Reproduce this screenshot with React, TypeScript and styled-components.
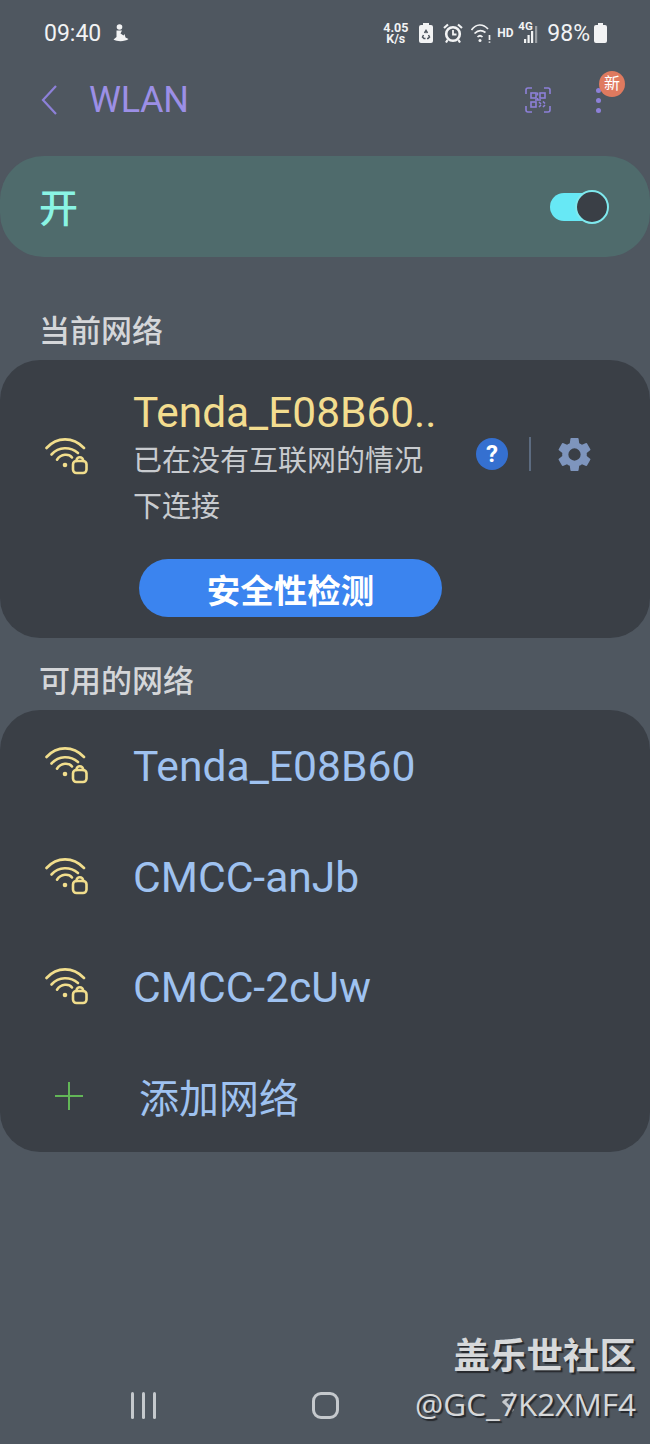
import styled, { createGlobalStyle } from 'styled-components';

const GlobalStyle = createGlobalStyle`
  html, body {
    margin: 0;
    padding: 0;
    background: #4f5760;
  }
  * {
    box-sizing: border-box;
  }
`;

const FONT = `Roboto, "Noto Sans CJK SC", sans-serif`;

const WifiLock = () => (
  <WifiSvg viewBox="0 0 44 38" fill="none" stroke="#f1de8d" strokeWidth="2.6" strokeLinecap="round">
    <path d="M1.5 11C12 -0.5 28 -0.5 39 11" />
    <path d="M6.500 17.500C14 9.500 25 9.500 33 16" />
    <path d="M12 22.700C16 16.500 24 16.500 27 20.500" />
    <circle cx="20" cy="28" r="2.300" fill="#f1de8d" stroke="none" />
    <rect x="28" y="24" width="13.500" height="12" rx="3.500" />
    <path d="M31.500 24v-.5a3.300 3.300 0 0 1 6.600 0v.5" />
  </WifiSvg>
);

const QrIcon = () => (
  <svg width="26" height="26" viewBox="0 0 26 26" fill="none" stroke="#8d80d8" strokeWidth="1.6">
    <path d="M1 7V3a2 2 0 0 1 2-2h4M19 1h4a2 2 0 0 1 2 2v4M25 19v4a2 2 0 0 1-2 2h-4M7 25H3a2 2 0 0 1-2-2v-4" />
    <rect x="6" y="6" width="5" height="5" />
    <rect x="15" y="6" width="5" height="5" />
    <rect x="6" y="15" width="5" height="5" />
    <path d="M12.500 5.500v3M12.500 11v2M10 13h6M14 15l2 2M18 14.500l2 2M14 20l2-2M18 20l2-2" />
  </svg>
);

const GearIcon = () => (
  <GearSvg viewBox="0 0 24 24">
    <path
      fill="#7e95bd"
      d="M19.14 12.94c.04-.3.06-.61.06-.94s-.02-.64-.07-.94l2.03-1.58a.49.49 0 0 0 .12-.61l-1.92-3.32a.49.49 0 0 0-.59-.22l-2.39.96a7 7 0 0 0-1.62-.94l-.36-2.54a.48.48 0 0 0-.48-.41h-3.84a.48.48 0 0 0-.47.41l-.36 2.54c-.59.24-1.13.57-1.62.94l-2.39-.96a.49.49 0 0 0-.59.22L2.74 8.87a.48.48 0 0 0 .12.61l2.03 1.58c-.05.3-.09.63-.09.94s.02.64.07.94l-2.03 1.58a.49.49 0 0 0-.12.61l1.92 3.32c.12.22.37.29.59.22l2.39-.96c.5.38 1.03.7 1.62.94l.36 2.54c.05.24.24.41.48.41h3.84c.24 0 .44-.17.47-.41l.36-2.54c.59-.24 1.13-.56 1.62-.94l2.39.96c.22.08.47 0 .59-.22l1.92-3.32a.48.48 0 0 0-.12-.61zM12 15.600A3.600 3.600 0 1 1 12 8.400a3.600 3.600 0 0 1 0 7.200z"
    />
  </GearSvg>
);

const StatusIcons = () => (
  <StatusRight>
    <Speed>
      4.05
      <br />
      K/s
    </Speed>
    <svg width="14" height="20" viewBox="0 0 14 20">
      <path fill="#f2f3f4" d="M4 0h6v2h2a2 2 0 0 1 2 2v14a2 2 0 0 1-2 2H2a2 2 0 0 1-2-2V4a2 2 0 0 1 2-2h2z" />
      <path fill="none" stroke="#4f5760" strokeWidth="1.500" d="M5.500 10l1.500-2.500 1.500 2.500M9.500 12l1 2-1.500 1.500H8M4.500 12l-1 2 1.500 1.500h1.500" />
    </svg>
    <svg width="20" height="20" viewBox="0 0 20 20" fill="none" stroke="#f2f3f4">
      <circle cx="10" cy="11" r="6.800" strokeWidth="2.600" />
      <path d="M10 7v4.500h3.500" strokeWidth="1.800" />
      <path d="M1 5l4-3.500M19 5l-4-3.500M4.500 17L3 19.500M15.500 17l1.500 2.500" strokeWidth="2.200" />
    </svg>
    <svg width="20" height="19" viewBox="0 0 20 19" fill="none" stroke="#f2f3f4" strokeWidth="1.700">
      <path d="M.5 6C5-.5 12-.5 17 5M3.500 9.500C7 6 11 6 14.500 8.500M6.500 13c1.500-1.500 3.500-1.500 5 0" />
      <circle cx="9" cy="16.500" r="1.500" fill="#f2f3f4" stroke="none" />
      <path d="M18.500 11v5M18.500 17.500v1.200" />
    </svg>
    <Hd>HD</Hd>
    <Signal>
      <FourG>4G</FourG>
      <svg width="15" height="20" viewBox="0 0 15 20" fill="#f2f3f4">
        <rect x="0" y="16" width="2.200" height="4" />
        <rect x="3.500" y="12" width="2.200" height="8" />
        <rect x="7" y="8" width="2.200" height="12" />
        <rect x="11" y="3" width="2.200" height="17" opacity="0.45" />
      </svg>
    </Signal>
    <Percent>98%</Percent>
    <svg width="13" height="20" viewBox="0 0 13 20">
      <path fill="#f2f3f4" d="M4 0h5v2h2a2 2 0 0 1 2 2v14a2 2 0 0 1-2 2H2a2 2 0 0 1-2-2V4a2 2 0 0 1 2-2h2z" />
    </svg>
  </StatusRight>
);

const networks = ['Tenda_E08B60', 'CMCC-anJb', 'CMCC-2cUw'];

const App = () => {
  return (
    <Page>
      <GlobalStyle />
      <StatusBar>
        <StatusLeft>
          <Time>09:40</Time>
          <svg width="17" height="19" viewBox="0 0 17 19" fill="#f2f3f4">
            <circle cx="7.500" cy="3" r="2.800" />
            <path d="M4.500 6.500h5.500l-1.500 3 3 2 1-1.500 1 3.500 3 1.500c-3 2.500-11 3-15 .500l3-2.500z" />
          </svg>
        </StatusLeft>
        <StatusIcons />
      </StatusBar>

      <Header>
        <HeaderLeft>
          <svg width="16" height="30" viewBox="0 0 16 30" fill="none" stroke="#8d80d8" strokeWidth="2.200">
            <path d="M15 1L2 15l13 14" />
          </svg>
          <Title>WLAN</Title>
        </HeaderLeft>
        <HeaderRight>
          <QrIcon />
          <MoreButton>
            <Dot />
            <Dot />
            <Dot />
            <NewBadge>新</NewBadge>
          </MoreButton>
        </HeaderRight>
      </Header>

      <SwitchCard>
        <SwitchLabel>开</SwitchLabel>
        <Toggle>
          <ToggleKnob />
        </Toggle>
      </SwitchCard>

      <SectionLabel>当前网络</SectionLabel>
      <CurrentCard>
        <CurrentRow>
          <IconSlot $lift={6}>
            <WifiLock />
          </IconSlot>
          <CurrentInfo>
            <CurrentName>Tenda_E08B60..</CurrentName>
            <CurrentStatus>已在没有互联网的情况<br />下连接</CurrentStatus>
          </CurrentInfo>
          <CurrentActions>
            <HelpBadge>?</HelpBadge>
            <Divider />
            <GearIcon />
          </CurrentActions>
        </CurrentRow>
        <CheckButton>安全性检测</CheckButton>
      </CurrentCard>

      <SectionLabel $tight>可用的网络</SectionLabel>
      <NetworkCard>
        {networks.map((name) => (
          <NetworkRow key={name}>
            <IconSlot>
              <WifiLock />
            </IconSlot>
            <NetworkName>{name}</NetworkName>
          </NetworkRow>
        ))}
        <NetworkRow>
          <IconSlot $lift={4}>
            <PlusSvg viewBox="0 0 30 30" stroke="#62b657" strokeWidth="2">
              <path d="M15 1v28M1 15h28" />
            </PlusSvg>
          </IconSlot>
          <AddLabel>添加网络</AddLabel>
        </NetworkRow>
      </NetworkCard>

      <NavBar>
        <NavBars>
          <NavBarLine />
          <NavBarLine />
          <NavBarLine />
        </NavBars>
        <NavHome />
        <NavBack />
      </NavBar>

      <Watermark>
        <WatermarkTitle>盖乐世社区</WatermarkTitle>
        <WatermarkUser>@GC_7K2XMF4</WatermarkUser>
      </Watermark>
    </Page>
  );
};

export default App;

const Page = styled.div`
  position: relative;
  width: 650px;
  height: 1444px;
  overflow: hidden;
  background: #4f5760;
  font-family: ${FONT};
`;

const StatusBar = styled.div`
  display: flex;
  align-items: center;
  justify-content: space-between;
  height: 66px;
  padding: 0 43px 0 44px;
  color: #f2f3f4;
`;

const StatusLeft = styled.div`
  display: flex;
  align-items: center;
  gap: 11px;
`;

const Time = styled.span`
  font-size: 23px;
`;

const StatusRight = styled.div`
  display: flex;
  align-items: center;
  gap: 8px;

  > svg:nth-of-type(1) {
    margin-right: 2px;
  }

  > svg:last-child {
    margin-left: -4px;
  }
`;

const Speed = styled.span`
  width: 25px;
  margin-right: 3px;
  font-size: 12.5px;
  line-height: 11px;
  font-weight: 700;
  text-align: center;
`;

const Hd = styled.span`
  width: 16px;
  margin-left: -2px;
  font-size: 12px;
  font-weight: 700;
  white-space: nowrap;
`;

const Signal = styled.div`
  position: relative;
  width: 21px;
  height: 20px;
  margin-left: -3px;

  svg {
    position: absolute;
    right: 0;
    bottom: 0;
  }
`;

const FourG = styled.span`
  position: absolute;
  left: 0;
  top: -4px;
  font-size: 11.5px;
  font-weight: 700;
`;

const Percent = styled.span`
  font-size: 23px;
`;

const Header = styled.header`
  display: flex;
  align-items: center;
  justify-content: space-between;
  height: 68px;
  padding: 0 41px;
`;

const HeaderLeft = styled.div`
  display: flex;
  align-items: center;
  gap: 32px;
`;

const Title = styled.h1`
  margin: 0;
  font-size: 36px;
  font-weight: 400;
  color: #9c8fe6;
  letter-spacing: -0.3px;
`;

const HeaderRight = styled.div`
  display: flex;
  align-items: center;
  gap: 45px;
`;

const MoreButton = styled.div`
  position: relative;
  display: flex;
  flex-direction: column;
  gap: 5px;
  width: 5px;
  margin-right: 8px;
`;

const Dot = styled.span`
  width: 5px;
  height: 5px;
  border-radius: 50%;
  background: #8d80d8;
`;

const NewBadge = styled.span`
  position: absolute;
  left: 3px;
  top: -17px;
  width: 26px;
  height: 26px;
  border-radius: 50%;
  background: #df7a5f;
  color: #fff;
  font-size: 16px;
  line-height: 26px;
  text-align: center;
`;

const SwitchCard = styled.section`
  display: flex;
  align-items: center;
  justify-content: space-between;
  height: 101px;
  margin-top: 22px;
  padding: 0 42px 0 39px;
  border-radius: 44px;
  background: #4f6b6c;
`;

const SwitchLabel = styled.span`
  padding-bottom: 4px;
  font-size: 39px;
  font-weight: 500;
  color: #8af4e4;
`;

const Toggle = styled.div`
  position: relative;
  width: 58px;
  height: 28px;
  border-radius: 14px;
  background: #67e8f5;
`;

const ToggleKnob = styled.span`
  position: absolute;
  right: -1px;
  top: -3px;
  width: 34px;
  height: 34px;
  border-radius: 50%;
  background: #3a3f46;
  border: 2px solid #7fe9ee;
`;

const SectionLabel = styled.h2<{ $tight?: boolean }>`
  display: flex;
  align-items: center;
  height: ${({ $tight }) => ($tight ? '72px' : '103px')};
  padding: ${({ $tight }) => ($tight ? '14px' : '46px')} 0 6px 39px;
  margin: 0;
  font-size: 31px;
  font-weight: 500;
  color: #d4d6d9;
`;

const CurrentCard = styled.section`
  display: flex;
  flex-direction: column;
  height: 278px;
  border-radius: 40px;
  background: #3a3f46;
  padding-top: 30px;
`;

const CurrentRow = styled.div`
  display: flex;
  align-items: center;
`;

const IconSlot = styled.div<{ $lift?: number }>`
  display: flex;
  align-items: center;
  justify-content: flex-start;
  flex-shrink: 0;
  width: 133px;
  padding: 0 0 ${({ $lift }) => $lift ?? 0}px 45px;
`;

const WifiSvg = styled.svg`
  width: 44px;
  height: 38px;
  margin-bottom: 2px;
`;

const PlusSvg = styled.svg`
  width: 30px;
  height: 30px;
  margin-left: 9px;
`;

const GearSvg = styled.svg`
  width: 41px;
  height: 41px;
  margin-left: -3px;
`;

const CurrentInfo = styled.div`
  width: 319px;
`;

const CurrentName = styled.div`
  font-size: 42.4px;
  line-height: 46px;
  color: #f3dd8f;
  white-space: nowrap;
`;

const CurrentStatus = styled.div`
  margin-top: 2px;
  font-size: 29px;
  line-height: 46px;
  color: #c8cbcf;
`;

const CurrentActions = styled.div`
  display: flex;
  align-items: center;
  margin-left: 24px;
  padding-bottom: 12px;
`;

const HelpBadge = styled.span`
  width: 32px;
  height: 32px;
  border-radius: 50%;
  background: #3570d0;
  color: #fff;
  font-size: 24px;
  line-height: 32px;
  font-weight: 700;
  text-align: center;
`;

const Divider = styled.span`
  width: 2px;
  height: 34px;
  margin: 0 26px 0 21px;
  background: #5c6b80;
`;

const CheckButton = styled.button`
  align-self: flex-start;
  width: 303px;
  height: 58px;
  margin: 29px 0 0 139px;
  border: 0;
  border-radius: 29px;
  background: #3b84ef;
  color: #fff;
  font-family: ${FONT};
  font-size: 33.5px;
  font-weight: 700;
`;

const NetworkCard = styled.section`
  height: 442px;
  padding-top: 1px;
  border-radius: 40px;
  background: #3a3f46;
`;

const NetworkRow = styled.div`
  display: flex;
  align-items: center;
  height: 110.5px;
`;

const NetworkName = styled.span`
  font-size: 42.6px;
  color: #9fc2f0;
`;

const AddLabel = styled.span`
  margin: 0 0 4px 6px;
  font-size: 40px;
  color: #9fc2f0;
`;

const NavBar = styled.nav`
  position: absolute;
  left: 0;
  right: 0;
  top: 1384px;
  height: 44px;
`;

const NavBars = styled.div`
  position: absolute;
  left: 131px;
  top: 8px;
  display: flex;
  gap: 8px;
`;

const NavBarLine = styled.span`
  width: 3px;
  height: 27px;
  border-radius: 2px;
  background: #c5c9cd;
`;

const NavHome = styled.span`
  position: absolute;
  left: 312px;
  top: 8px;
  width: 27px;
  height: 27px;
  border: 3px solid #c5c9cd;
  border-radius: 9px;
`;

const NavBack = styled.span`
  position: absolute;
  left: 505px;
  top: 11px;
  width: 14px;
  height: 14px;
  border-left: 3px solid #c5c9cd;
  border-bottom: 3px solid #c5c9cd;
  transform: rotate(45deg);
`;

const Watermark = styled.div`
  position: absolute;
  right: 14px;
  top: 1332px;
  text-align: right;
  color: #d6d8da;
  text-shadow: 2px 2px 1px #26292d;
`;

const WatermarkTitle = styled.div`
  font-size: 36.5px;
  line-height: 50px;
  font-weight: 700;
`;

const WatermarkUser = styled.div`
  font-family: "Open Sans", sans-serif;
  font-size: 31.5px;
  line-height: 44px;
`;
